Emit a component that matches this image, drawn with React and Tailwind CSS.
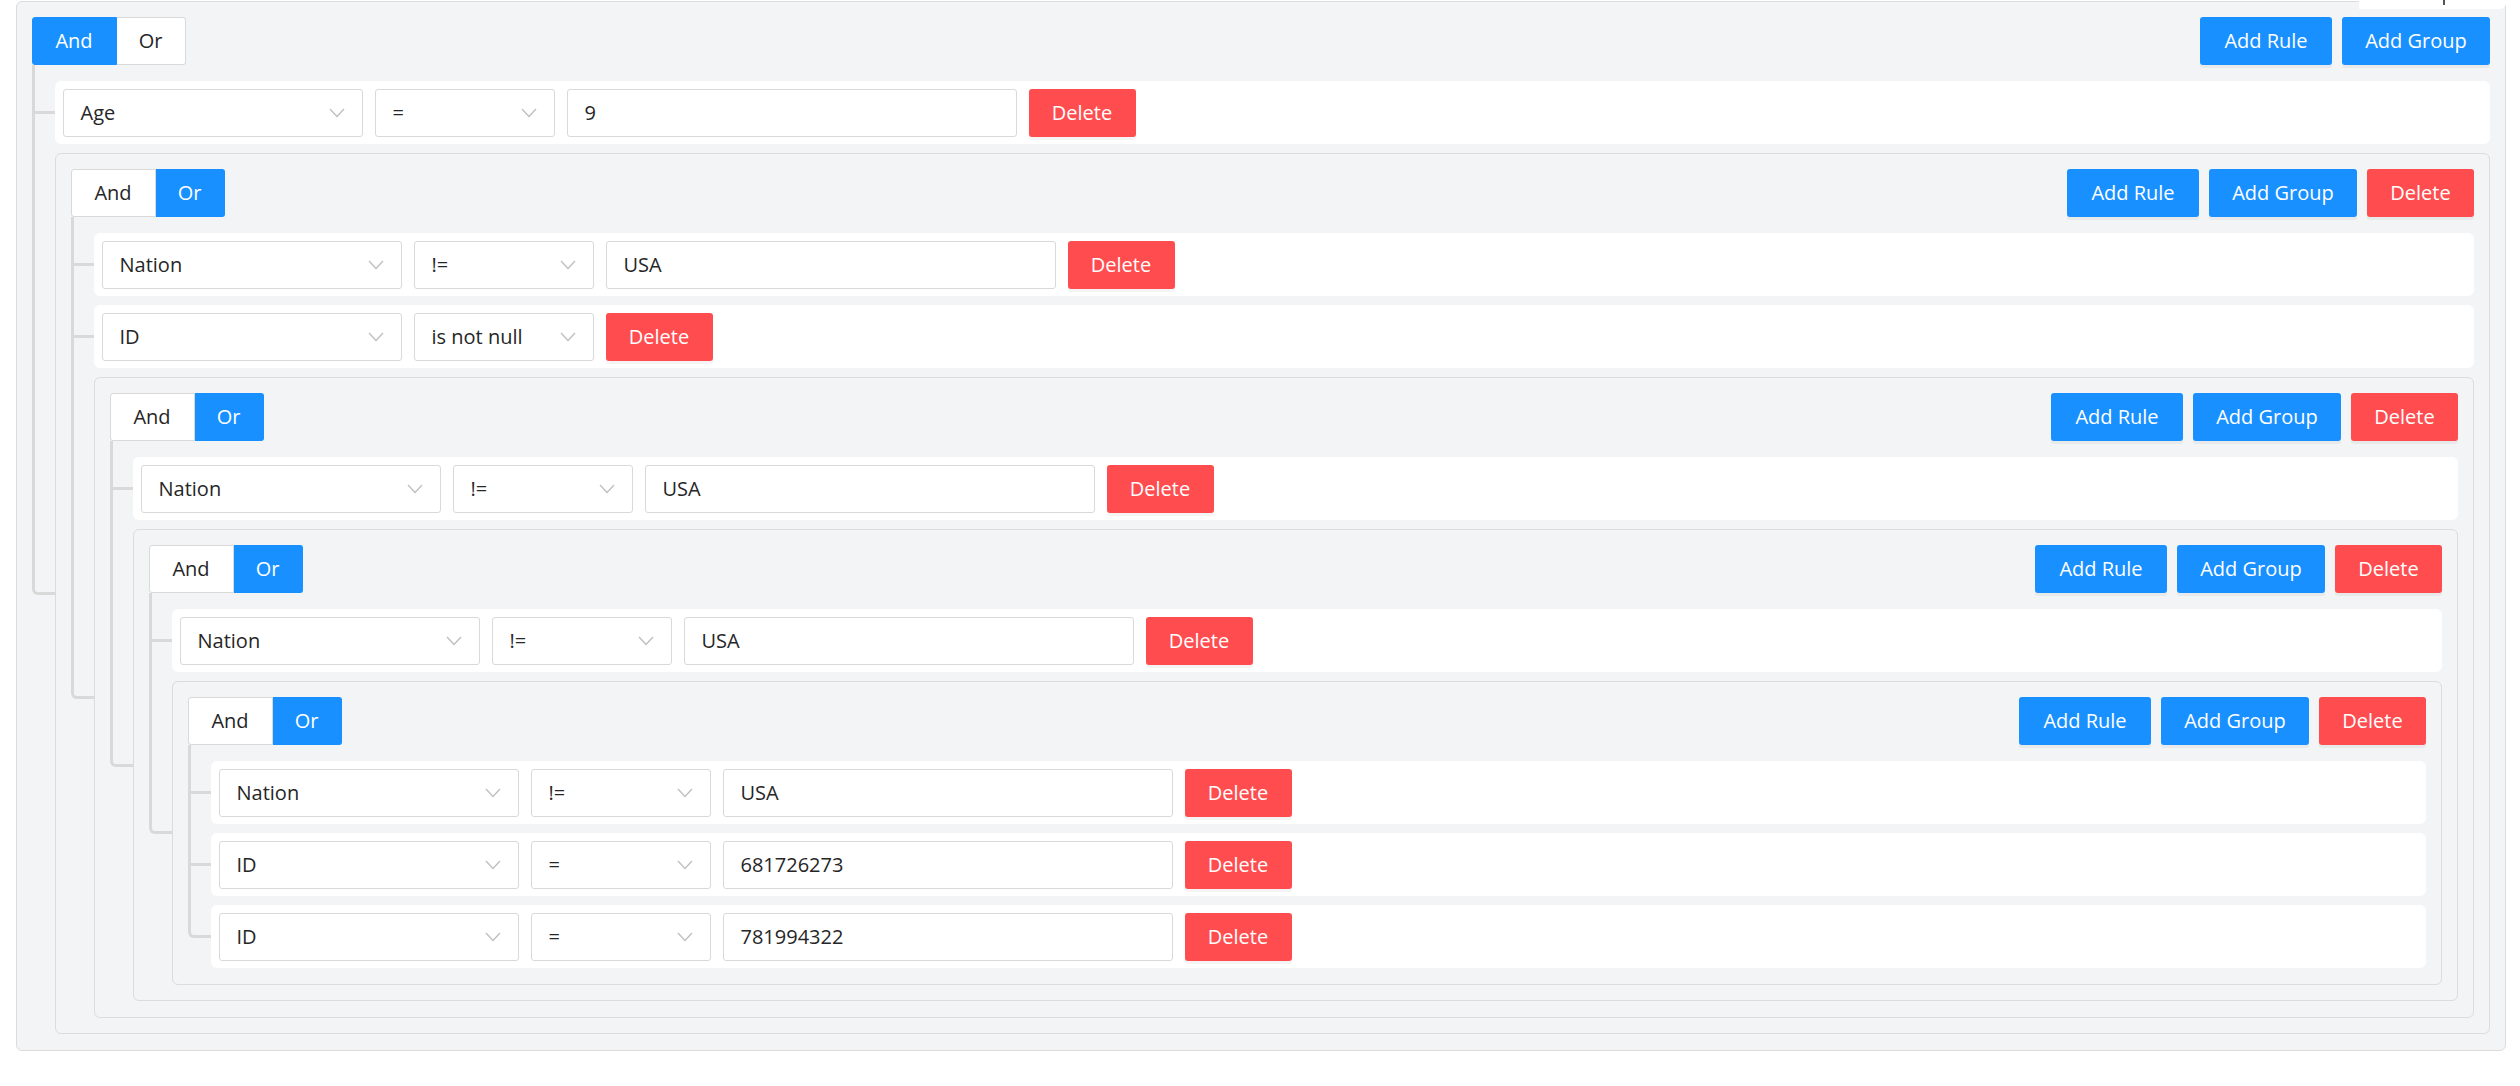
const tree = {
  conj: "and",
  children: [
    { rule: ["Age", "=", "9"] },
    {
      conj: "or",
      children: [
        { rule: ["Nation", "!=", "USA"] },
        { rule: ["ID", "is not null"] },
        {
          conj: "or",
          children: [
            { rule: ["Nation", "!=", "USA"] },
            {
              conj: "or",
              children: [
                { rule: ["Nation", "!=", "USA"] },
                {
                  conj: "or",
                  children: [
                    { rule: ["Nation", "!=", "USA"] },
                    { rule: ["ID", "=", "681726273"] },
                    { rule: ["ID", "=", "781994322"] },
                  ],
                },
              ],
            },
          ],
        },
      ],
    },
  ],
};

function Chevron() {
  return (
    <svg width="16" height="10" viewBox="0 0 16 10" className="shrink-0">
      <polyline points="1,1 8,8.5 15,1" fill="none" stroke="#bfbfbf" strokeWidth="1.4" />
    </svg>
  );
}

function Select({ value, width }) {
  return (
    <div
      className={`flex h-[48px] ${width} items-center justify-between rounded-[3px] border border-[#d9d9d9] bg-white pl-[17px] pr-[17px]`}
    >
      <span>{value}</span>
      <Chevron />
    </div>
  );
}

function Button({ children, danger, width }) {
  return (
    <button
      type="button"
      className={`flex h-[48px] ${width} items-center justify-center rounded-[3px] text-white shadow-[0_3px_0_rgba(0,0,0,0.045)] ${
        danger ? "bg-[#ff4d4f]" : "bg-[#1890ff]"
      }`}
    >
      {children}
    </button>
  );
}

function Toggle({ value }) {
  const on = "bg-[#1890ff] border-[#1890ff] text-white";
  const off = "bg-white border-[#d9d9d9] text-[#262626]";
  return (
    <div className="flex h-[48px]">
      <span
        className={`flex w-[85px] items-center justify-center rounded-l-[3px] border ${value === "and" ? on : off}`}
      >
        And
      </span>
      <span
        className={`flex w-[69px] items-center justify-center rounded-r-[3px] border border-l-0 ${value === "or" ? on : off}`}
      >
        Or
      </span>
    </div>
  );
}

function Rule({ rule }) {
  const [field, op, value] = rule;
  return (
    <div className="flex h-[63px] items-center gap-[12px] rounded-[6px] bg-white px-[8px]">
      <Select value={field} width="w-[300px]" />
      <Select value={op} width="w-[180px]" />
      {value !== undefined ? (
        <div className="flex h-[48px] w-[450px] items-center rounded-[3px] border border-[#d9d9d9] bg-white px-[17px]">
          {value}
        </div>
      ) : null}
      <Button danger width="w-[107px]">
        Delete
      </Button>
    </div>
  );
}

function Child({ first, last, children }) {
  return (
    <div className="relative">
      <span
        className={`absolute left-[-23px] w-[23px] border-b-[3px] border-l-[3px] border-[#d9d9d9] ${
          first ? "top-[-16px] h-[calc(50%+17.5px)]" : "top-[-9px] h-[calc(50%+10.5px)]"
        } ${last ? "rounded-bl-[6px]" : ""}`}
      />
      {!last ? <span className="absolute top-1/2 bottom-0 left-[-23px] border-l-[3px] border-[#d9d9d9]" /> : null}
      {children}
    </div>
  );
}

function Group({ node, root }) {
  const n = node.children.length;
  return (
    <div className="relative rounded-[6px] border border-[#dcdcdc] bg-[#f3f4f6] p-[15px] pb-[15.5px]">
      <div className="flex h-[48px] items-center justify-between">
        <Toggle value={node.conj} />
        <div className="flex gap-[10px]">
          <Button width="w-[132px]">Add Rule</Button>
          <Button width="w-[148px]">Add Group</Button>
          {!root ? (
            <Button danger width="w-[107px]">
              Delete
            </Button>
          ) : null}
        </div>
      </div>
      <div className="mt-[16px] ml-[23px] flex flex-col gap-[9px]">
        {node.children.map((c, i) => (
          <Child key={i} first={i === 0} last={i === n - 1}>
            {c.rule ? <Rule rule={c.rule} /> : <Group node={c} />}
          </Child>
        ))}
      </div>
    </div>
  );
}

export default function App() {
  return (
    <div className="min-h-[1086px] bg-white pt-[1px] pr-[14px] pl-[15.5px] font-['Open_Sans',sans-serif] text-[20px] text-[#262626]">
      <div className="relative">
        <div className="absolute top-[-1px] right-0 z-10 h-[9px] w-[147px] rounded-br-[6px] bg-white">
          <span className="absolute top-0 left-[84px] h-[5px] w-[1.5px] bg-[#555]" />
        </div>
        <Group node={tree} root />
      </div>
    </div>
  );
}
